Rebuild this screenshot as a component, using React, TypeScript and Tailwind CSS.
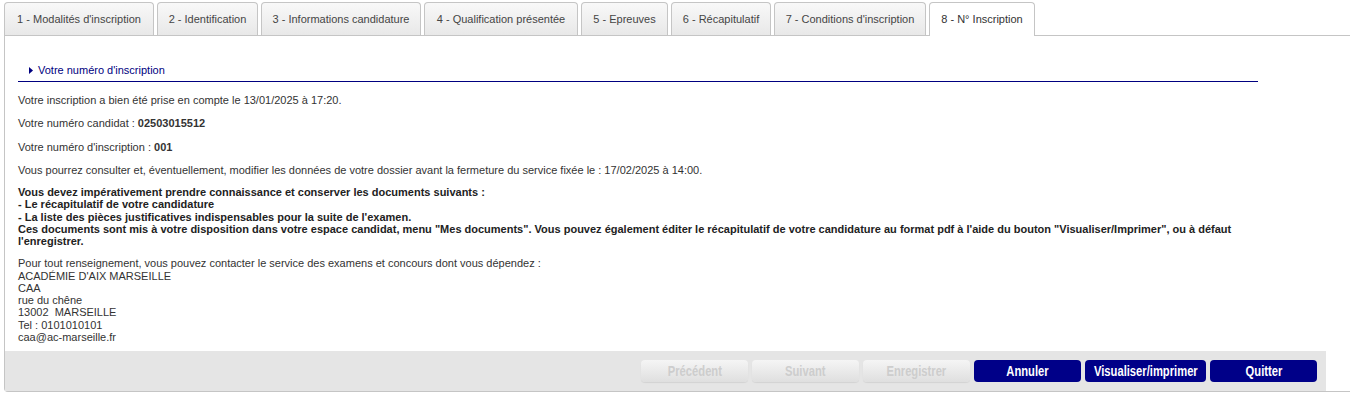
import React from "react";

const tabs: { label: string; w: string }[] = [
  { label: "1 - Modalités d'inscription", w: "w-[150px]" },
  { label: "2 - Identification", w: "w-[101px]" },
  { label: "3 - Informations candidature", w: "w-[160px]" },
  { label: "4 - Qualification présentée", w: "w-[154px]" },
  { label: "5 - Epreuves", w: "w-[87px]" },
  { label: "6 - Récapitulatif", w: "w-[100px]" },
  { label: "7 - Conditions d'inscription", w: "w-[152px]" },
  { label: "8 - N° Inscription", w: "w-[106px]" },
];

function Tab({ label, w, active }: { label: string; w: string; active: boolean }) {
  if (active) {
    return (
      <div className={w + " h-[34px] flex items-center justify-center border border-b-0 border-[#c5c5c5] rounded-t-[4px] bg-white text-[#333] whitespace-nowrap"}>
        {label}
      </div>
    );
  }
  return (
    <div className={w + " h-[33px] flex items-center justify-center border border-b-0 border-[#c5c5c5] rounded-t-[4px] bg-gradient-to-b from-[#f8f8f8] to-[#e8e8e8] text-[#454545] whitespace-nowrap"}>
      {label}
    </div>
  );
}

function Label({ label }: { label: string }) {
  return (
    <span className="inline-block scale-x-[0.8] whitespace-nowrap font-bold text-[14px] font-['Liberation_Sans',Arial,sans-serif]">
      {label}
    </span>
  );
}

function DisabledBtn({ label }: { label: string }) {
  return (
    <div className="w-[107px] h-[22px] rounded-[4px] bg-gradient-to-b from-[#f5f5f5] to-[#dfdfdf] shadow-[0_1px_1px_rgba(0,0,0,0.08)] flex items-center justify-center text-[#cdcdcd]">
      <Label label={label} />
    </div>
  );
}

function Btn({ label, wide }: { label: string; wide?: boolean }) {
  return (
    <div
      className={
        (wide ? "w-[121px]" : "w-[107px]") +
        " h-[22px] rounded-[4px] bg-[#000088] flex items-center justify-center text-white overflow-hidden"
      }
    >
      <Label label={label} />
    </div>
  );
}

export default function App() {
  return (
    <div className="w-[1350px] h-[400px] bg-white overflow-hidden pt-[2px] pl-[4px] text-[11px] text-[#333] font-['Liberation_Sans',Arial,sans-serif]">
      <div className="relative z-10 flex items-start gap-[3px] h-[33px]">
        {tabs.map((t, i) => (
          <Tab key={t.label} label={t.label} w={t.w} active={i === 7} />
        ))}
      </div>
      <div className="w-[1350px] border-t border-l border-b border-[#c5c5c5] rounded-bl-[4px]">
        <div className="pl-[13px] w-[1253px] pt-[27px]">
          <div className="flex items-center h-[14px] pl-[11px] mb-[4px] box-content pb-[4px] border-b border-[#000080] text-[#000080]">
            <svg width="4" height="7" viewBox="0 0 4 7" className="mr-[5px]">
              <polygon points="0,0 4,3.5 0,7" fill="#000080" />
            </svg>
            <span>Votre numéro d'inscription</span>
          </div>
          <div className="pt-[8px] leading-[12.25px] w-[1240px]">
            <p className="mb-[11px]">Votre inscription a bien été prise en compte le 13/01/2025 à 17:20.</p>
            <p className="mb-[11px]">
              Votre numéro candidat : <b>02503015512</b>
            </p>
            <p className="mb-[11px]">
              Votre numéro d'inscription : <b>001</b>
            </p>
            <p className="mb-[10px]">
              Vous pourrez consulter et, éventuellement, modifier les données de votre dossier avant la fermeture du service fixée le : 17/02/2025 à 14:00.
            </p>
            <p className="mb-[10px] font-bold text-[#222]">
              Vous devez impérativement prendre connaissance et conserver les documents suivants :
              <br />- Le récapitulatif de votre candidature
              <br />- La liste des pièces justificatives indispensables pour la suite de l'examen.
              <br />
              Ces documents sont mis à votre disposition dans votre espace candidat, menu "Mes documents". Vous pouvez également éditer le récapitulatif de votre candidature au format pdf à l'aide du bouton "Visualiser/Imprimer", ou à défaut l'enregistrer.
            </p>
            <p>
              Pour tout renseignement, vous pouvez contacter le service des examens et concours dont vous dépendez :
              <br />ACADÉMIE D'AIX MARSEILLE
              <br />CAA
              <br />rue du chêne
              <br />13002&nbsp;&nbsp;MARSEILLE
              <br />Tel : 0101010101
              <br />caa@ac-marseille.fr
            </p>
          </div>
        </div>
        <div className="mt-[8px] w-[1321px] h-[40px] bg-[#e5e5e5] flex items-center justify-end gap-[4px] pr-[9px]">
          <DisabledBtn label="Précédent" />
          <DisabledBtn label="Suivant" />
          <DisabledBtn label="Enregistrer" />
          <Btn label="Annuler" />
          <Btn label="Visualiser/imprimer" wide />
          <Btn label="Quitter" />
        </div>
      </div>
    </div>
  );
}
